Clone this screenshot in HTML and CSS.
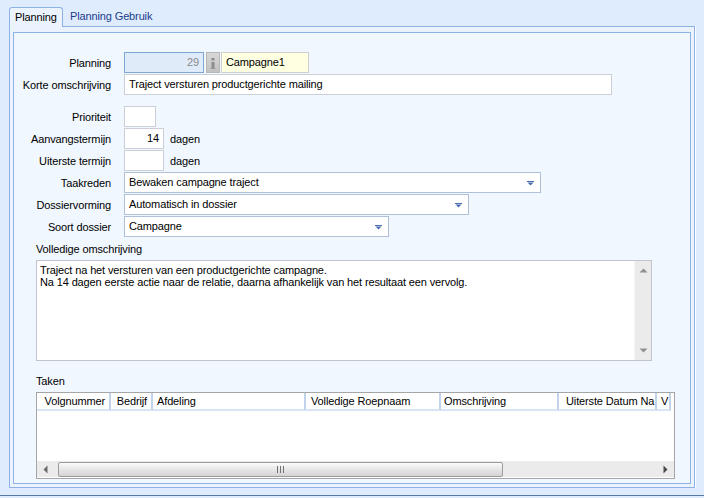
FILE: index.html
```html
<!DOCTYPE html>
<html>
<head>
<meta charset="utf-8">
<link rel="stylesheet" href="styles.css">
</head>
<body>
<div class="window">
  <div class="tabs">
    <div class="tab active">Planning</div>
    <div class="tab">Planning Gebruik</div>
  </div>
  <div class="panel">
    <div class="frame">
      <div class="row">
        <div class="lbl">Planning</div>
        <div class="box num plan">29</div>
        <div class="info"><svg width="8" height="14" viewBox="0 0 8 14"><rect x="2.5" y="2" width="3" height="2.5" fill="#8c8c8c"/><rect x="2.5" y="6" width="3" height="6.5" fill="#8c8c8c"/><rect x="1.5" y="12" width="5" height="1" fill="#9a9a9a"/></svg></div>
        <div class="box yellow camp">Campagne1</div>
      </div>
      <div class="row">
        <div class="lbl">Korte omschrijving</div>
        <div class="box w488">Traject versturen productgerichte mailing</div>
      </div>
      <div class="row gap">
        <div class="lbl">Prioriteit</div>
        <div class="box w32"></div>
      </div>
      <div class="row">
        <div class="lbl">Aanvangstermijn</div>
        <div class="box num w40">14</div>
        <div class="unit">dagen</div>
      </div>
      <div class="row">
        <div class="lbl">Uiterste termijn</div>
        <div class="box num w40"></div>
        <div class="unit">dagen</div>
      </div>
      <div class="row">
        <div class="lbl">Taakreden</div>
        <div class="box combo w417"><span>Bewaken campagne traject</span><svg class="arrow" width="7" height="5" viewBox="0 0 7 5"><rect x="0" y="0" width="7" height="1" fill="#4a6cb0"/><path d="M0.5 1.5 H6.5 L3.5 4.5 Z" fill="#4a6cb0"/></svg></div>
      </div>
      <div class="row">
        <div class="lbl">Dossiervorming</div>
        <div class="box combo w345"><span>Automatisch in dossier</span><svg class="arrow" width="7" height="5" viewBox="0 0 7 5"><rect x="0" y="0" width="7" height="1" fill="#4a6cb0"/><path d="M0.5 1.5 H6.5 L3.5 4.5 Z" fill="#4a6cb0"/></svg></div>
      </div>
      <div class="row">
        <div class="lbl">Soort dossier</div>
        <div class="box combo w265"><span>Campagne</span><svg class="arrow" width="7" height="5" viewBox="0 0 7 5"><rect x="0" y="0" width="7" height="1" fill="#4a6cb0"/><path d="M0.5 1.5 H6.5 L3.5 4.5 Z" fill="#4a6cb0"/></svg></div>
      </div>

      <div class="sect">
        <div class="sect-lbl">Volledige omschrijving</div>
        <div class="memo">
          <div class="memo-text">Traject na het versturen van een productgerichte campagne.<br>Na 14 dagen eerste actie naar de relatie, daarna afhankelijk van het resultaat een vervolg.</div>
          <div class="vscroll">
            <svg width="9" height="5" viewBox="0 0 9 5"><path d="M0.5 4.5 L4.5 0.5 L8.5 4.5 Z" fill="#8f8f8f"/></svg>
            <svg width="9" height="5" viewBox="0 0 9 5"><path d="M0.5 0.5 L8.5 0.5 L4.5 4.5 Z" fill="#8f8f8f"/></svg>
          </div>
        </div>

        <div class="sect-lbl taken">Taken</div>
        <div class="list">
          <div class="head">
            <div class="hc c1 r">Volgnummer</div>
            <div class="hc c2 r">Bedrijf</div>
            <div class="hc c3">Afdeling</div>
            <div class="hc c4">Volledige Roepnaam</div>
            <div class="hc c5">Omschrijving</div>
            <div class="hc c6">Uiterste Datum Na</div>
            <div class="hc c7">V</div>
          </div>
          <div class="body"></div>
          <div class="hscroll">
            <div class="harr"><svg width="5" height="9" viewBox="0 0 5 9"><path d="M4.5 0.5 L4.5 8.5 L0.5 4.5 Z" fill="#6a6a6a"/></svg></div>
            <div class="thumb"><svg width="8" height="7" viewBox="0 0 8 7"><rect x="0" y="0" width="1" height="7" fill="#707070"/><rect x="3" y="0" width="1" height="7" fill="#707070"/><rect x="6" y="0" width="1" height="7" fill="#707070"/></svg></div>
            <div class="track"></div>
            <div class="harr"><svg width="5" height="9" viewBox="0 0 5 9"><path d="M0.5 0.5 L0.5 8.5 L4.5 4.5 Z" fill="#4a4a4a"/></svg></div>
          </div>
        </div>
      </div>
    </div>
  </div>
  <div class="bottom-gap"></div>
  <div class="bottom-line"></div>
</div>
</body>
</html>
```
FILE: styles.css
```css
* { box-sizing: border-box; }
html, body { margin: 0; padding: 0; }
body {
  background: #dfecfe;
  font-family: "Liberation Sans", Arial, sans-serif;
  font-size: 11px;
  letter-spacing: -0.13px;
  color: #000;
  width: 704px;
  height: 498px;
  overflow: hidden;
}
.window { width: 704px; }
.tabs {
  display: flex;
  height: 26px;
  padding: 7px 0 0 9px;
}
.tab {
  height: 19px;
  line-height: 13px;
  padding-top: 3px;
  color: #1b3c8c;
  white-space: nowrap;
}
.tab.active {
  position: relative;
  z-index: 1;
  width: 54px;
  height: 20px;
  padding-left: 5px;
  border: 1px solid #8db2e3;
  border-bottom: none;
  border-radius: 3px 3px 0 0;
  background: #ebf3fe;
  color: #000;
}
.tab + .tab { margin-left: 7px; }
.panel {
  margin-left: 9px;
  width: 686px;
  border: 1px solid #8db2e3;
  box-shadow: 1px 0 0 #ffffff;
  background: #ebf3fe;
  padding: 5px 3px 3px 3px;
}
.frame {
  border: 1px solid #8db2e3;
  background: #f1f7ff;
  padding: 19px 0 4px 0;
}
.row {
  display: flex;
  align-items: center;
  height: 21px;
  margin-bottom: 1px;
}
.row.gap { margin-top: 11px; }
.lbl {
  width: 97px;
  margin-right: 13px;
  text-align: right;
  white-space: nowrap;
}
.box {
  height: 21px;
  line-height: 19px;
  border: 1px solid #cbd0d8;
  background: #fff;
  padding: 0 4px;
  white-space: nowrap;
  overflow: hidden;
}
.box.num { text-align: right; }
.plan {
  width: 80px;
  background: #e0ebf9;
  border-color: #80a6d6;
  color: #8a8a8a;
}
.info {
  width: 14px;
  height: 21px;
  margin: 0 1px 0 2px;
  border: 1px solid #b8b8b8;
  background: linear-gradient(#d8d8d8, #c2c2c2);
  display: flex;
  align-items: center;
  justify-content: center;
}
.yellow {
  background: #ffffe1;
  border-color: #cfcfcf;
}
.camp { width: 88px; }
.w488 { width: 488px; }
.w32 { width: 32px; }
.w40 { width: 40px; }
.w417 { width: 417px; }
.w345 { width: 345px; }
.w265 { width: 265px; }
.unit { margin-left: 6px; }
.combo {
  display: flex;
  align-items: center;
  justify-content: space-between;
  border-color: #afc0d8;
  padding-right: 6px;
}
.arrow { flex: none; margin-top: 1px; }
.sect { margin-left: 22px; padding-top: 5px; }
.sect-lbl {
  height: 13px;
  line-height: 13px;
  margin-bottom: 4px;
}
.sect-lbl.taken { margin-top: 14px; }
.memo {
  width: 616px;
  height: 101px;
  border: 1px solid #c0c4cc;
  background: #fff;
  display: flex;
}
.memo-text {
  flex: 1;
  padding: 3px 3px;
  line-height: 12px;
}
.vscroll {
  width: 17px;
  background: #ebebeb;
  border-left: 1px solid #f6f6f6;
  display: flex;
  flex-direction: column;
  justify-content: space-between;
  align-items: center;
  padding: 7px 0 7px 0;
}
.list {
  width: 639px;
  height: 87px;
  border: 1px solid #a6a6a6;
  background: #fff;
  display: flex;
  flex-direction: column;
}
.head {
  display: flex;
  height: 18px;
}
.hc {
  height: 18px;
  line-height: 16px;
  border-right: 2px solid #c2d4ec;
  border-bottom: 2px solid #d9e5f4;
  white-space: nowrap;
  overflow: hidden;
  flex: none;
}
.hc.r { text-align: right; padding-right: 4px; }
.c1 { width: 74px; }
.c2 { width: 42px; }
.c3 { width: 153px; padding-left: 4px; }
.c4 { width: 135px; padding-left: 5px; }
.c5 { width: 118px; padding-left: 3px; }
.c6 { width: 98px; padding-left: 7px; }
.c7 { width: 14px; padding-left: 4px; }
.body { flex: 1; }
.hscroll {
  height: 16px;
  margin-bottom: 1px;
  background: #ebebeb;
  display: flex;
  align-items: center;
}
.harr {
  width: 17px;
  height: 16px;
  display: flex;
  align-items: center;
  justify-content: center;
  flex: none;
}
.thumb {
  width: 445px;
  height: 15px;
  margin-left: 4px;
  border: 1px solid #9c9c9c;
  border-radius: 2px;
  background: linear-gradient(#fbfbfb, #e6e6e6 50%, #d4d4d4);
  display: flex;
  align-items: center;
  justify-content: center;
  flex: none;
}
.track { flex: 1; }
.bottom-gap { height: 7px; }
.bottom-line { height: 1px; background: #587aa5; }
```
